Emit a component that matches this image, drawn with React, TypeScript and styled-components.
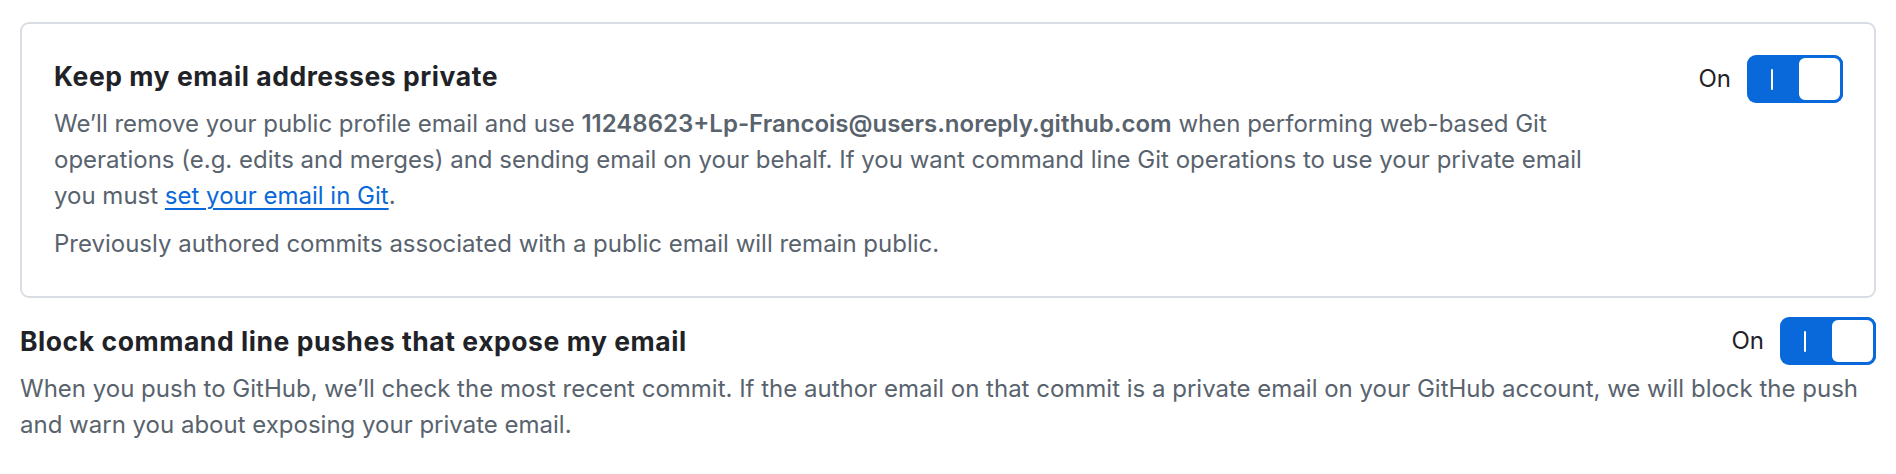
import styled, {createGlobalStyle} from 'styled-components';

const GlobalStyle = createGlobalStyle`
  html, body {
    margin: 0;
    padding: 0;
    background: #ffffff;
  }

  body {
    font-family: Inter, 'Liberation Sans', Arial, sans-serif;
    -webkit-font-smoothing: antialiased;
  }
`;

interface ToggleProps {
  checked: boolean;
}

const Toggle = ({checked}: ToggleProps) => (
    <ToggleStyle>
      <ToggleLabelStyle>{checked ? 'On' : 'Off'}</ToggleLabelStyle>
      <TrackStyle type="button" aria-pressed={checked}>
        <LineIconStyle/>
        <KnobStyle/>
      </TrackStyle>
    </ToggleStyle>
);

export default () => {
  return (
      <PageStyle>
        <GlobalStyle/>
        <CardStyle>
          <CardContentStyle>
            <TitleStyle>Keep my email addresses private</TitleStyle>
            <DescriptionStyle>
              We’ll remove your public profile email and use <strong>11248623+Lp-Francois@users.noreply.github.com</strong> when
              performing web-based Git operations (e.g. edits and merges) and sending email on your behalf. If you want
              command line Git operations to use your private email you must <LinkStyle href="#">set your email in Git</LinkStyle>.
            </DescriptionStyle>
            <NoteStyle>Previously authored commits associated with a public email will remain public.</NoteStyle>
          </CardContentStyle>
          <Toggle checked/>
        </CardStyle>

        <SectionStyle>
          <SectionHeaderStyle>
            <TitleStyle>Block command line pushes that expose my email</TitleStyle>
            <Toggle checked/>
          </SectionHeaderStyle>
          <SectionDescriptionStyle>
            When you push to GitHub, we’ll check the most recent commit. If the author email on that commit is a private
            email on your GitHub account, we will block the push and warn you about exposing your private email.
          </SectionDescriptionStyle>
        </SectionStyle>
      </PageStyle>
  );
}

const PageStyle = styled.div`
  padding: 22px 20px 0 20px;
  box-sizing: border-box;
`;

const CardStyle = styled.div`
  display: flex;
  align-items: flex-start;
  justify-content: space-between;
  gap: 96px;
  padding: 31px 31px 34px 32px;
  border: 2px solid #d8dee4;
  border-radius: 9px;
  box-sizing: border-box;
`;

const CardContentStyle = styled.div`
  flex: 1;
  min-width: 0;
  padding-top: 2px;
`;

const TitleStyle = styled.h3`
  margin: 0;
  font-size: 26.5px;
  line-height: 39px;
  font-weight: 700;
  letter-spacing: 0.55px;
  color: #1f2328;
`;

const DescriptionStyle = styled.p`
  margin: 10px 0 0 0;
  font-size: 24px;
  line-height: 36px;
  color: #59636e;

  strong {
    font-weight: 600;
  }
`;

const NoteStyle = styled(DescriptionStyle)`
  margin-top: 12px;
`;

const LinkStyle = styled.a`
  color: #0969da;
  text-decoration: underline;
  text-decoration-thickness: 2px;
  text-underline-offset: 4px;
`;

const SectionStyle = styled.div`
  margin-top: 19px;
`;

const SectionHeaderStyle = styled.div`
  display: flex;
  align-items: center;
  justify-content: space-between;
  gap: 24px;
`;

const SectionDescriptionStyle = styled(DescriptionStyle)`
  margin-top: 6px;
`;

const ToggleStyle = styled.div`
  display: flex;
  align-items: center;
  gap: 16px;
  flex-shrink: 0;
`;

const ToggleLabelStyle = styled.span`
  font-size: 24px;
  line-height: 36px;
  color: #1f2328;
`;

const TrackStyle = styled.button`
  display: flex;
  align-items: center;
  width: 96px;
  height: 48px;
  padding: 0;
  border: none;
  border-radius: 9px;
  background: #0969da;
  cursor: pointer;
`;

const LineIconStyle = styled.span`
  display: block;
  width: 2px;
  height: 21px;
  margin: 0 23px 0 24px;
  background: #ffffff;
  border-radius: 1px;
`;

const KnobStyle = styled.span`
  display: block;
  width: 48px;
  height: 48px;
  margin-left: auto;
  box-sizing: border-box;
  border: 3px solid #0969da;
  border-radius: 9px;
  background: #ffffff;
`;
